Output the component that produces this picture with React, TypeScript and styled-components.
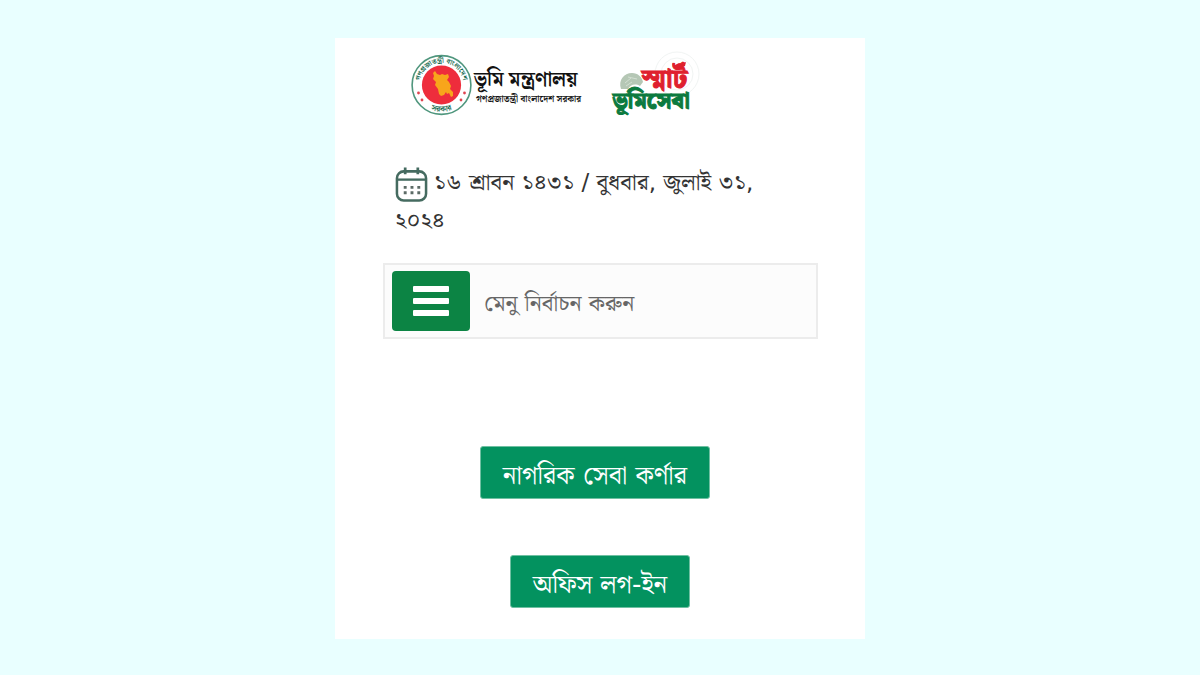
import React from "react";
import styled, { createGlobalStyle } from "styled-components";

const bengali = '"DejaVu Sans", "Noto Serif Bengali", serif';
const logoFont = '"Noto Serif Bengali", "Liberation Serif", serif';

const GlobalStyle = createGlobalStyle`
  *, *::before, *::after { box-sizing: border-box; }
  body {
    margin: 0;
    background: #e9ffff;
    font-family: ${bengali};
    color: #333;
  }
`;

const Page = styled.div`
  min-height: 100vh;
  display: flex;
  justify-content: center;
  align-items: flex-start;
  padding: 38px 16px 36px;
`;

const Card = styled.main`
  width: 100%;
  max-width: 530px;
  padding: 12px 47px 31px 48px;
  background: #fff;
`;

const Header = styled.header`
  display: flex;
  align-items: center;
  gap: 28px;
  height: 70px;
  padding-left: 28px;
  font-family: ${logoFont};
`;

const Ministry = styled.a`
  display: flex;
  align-items: center;
  gap: 2px;
  color: #111;
  text-decoration: none;
`;

const MinistryText = styled.span`
  display: flex;
  flex-direction: column;
  padding-top: 2px;
  white-space: nowrap;
`;

const MinistryName = styled.strong`
  font-size: 20px;
  line-height: 28px;
`;

const MinistrySub = styled.span`
  padding-left: 2px;
  font-size: 9px;
  line-height: 12px;
  font-weight: 700;
`;

const SmartLogo = styled.a`
  display: block;
  line-height: 0;
`;

const DateLine = styled.p`
  margin: 44px 0 0;
  padding: 0 24px 0 12px;
  font-size: 23px;
  line-height: 37px;
`;

const CalendarIcon = styled.svg`
  width: 33px;
  height: 37px;
  margin-right: 6px;
  vertical-align: middle;
`;

const MenuBar = styled.nav`
  display: flex;
  align-items: center;
  gap: 14px;
  margin-top: 24px;
  padding: 6px 7px;
  border: 2px solid #ececec;
  background: #fcfcfc;
  color: #666;
  font-size: 23px;
  line-height: 36px;
`;

const MenuLabel = styled.span`
  padding-top: 3px;
`;

const MenuButton = styled.button`
  display: flex;
  align-items: center;
  justify-content: center;
  width: 78px;
  height: 60px;
  padding: 0;
  border: 0;
  border-radius: 4px;
  background: #0c8444;
  cursor: pointer;
`;

const Actions = styled.div`
  display: flex;
  flex-direction: column;
  align-items: center;
  gap: 56px;
  margin-top: 107px;
`;

const ActionButton = styled.button<{ $wide?: boolean }>`
  min-width: ${(p) => (p.$wide ? 230 : 180)}px;
  height: 53px;
  margin-right: ${(p) => (p.$wide ? 11 : 1)}px;
  padding: 4px 16px 0;
  border: 1px solid #6fc0a2;
  border-radius: 3px;
  background: #03925f;
  color: #fff;
  font-family: inherit;
  font-size: 26px;
  line-height: 40px;
  white-space: nowrap;
  cursor: pointer;
`;

const Emblem = () => (
  <svg width="61" height="62" viewBox="0 0 61 62" aria-hidden="true">
    <defs>
      <path id="arcTop" d="M11.6 42 A22 22 0 1 1 49.4 42" />
      <path id="arcBottom" d="M12 50 A26.5 26.5 0 0 0 49 50" />
    </defs>
    <circle cx="30.5" cy="31" r="29.4" fill="#fff" stroke="#4f967d" strokeWidth="1.6" />
    <circle cx="30.5" cy="31" r="19.6" fill="#ee2d3c" />
    <path
      d="M22 19l2-2 2 3 3 1 2-1 3 1 3-1 1 3-2 3 2 2 1 2 1 2-1 3 3 3v4l-2 1-2-4-2 1-1-2-2 3-3 1-2-2-1-5-3-4 1-3-3-3 1-3z"
      fill="#f8a51b"
    />
    <text fontSize="7" fontWeight="700" fill="#176b50" textAnchor="middle">
      <textPath href="#arcTop" startOffset="50%">গণপ্রজাতন্ত্রী বাংলাদেশ</textPath>
    </text>
    <text fontSize="8" fontWeight="700" fill="#176b50" textAnchor="middle">
      <textPath href="#arcBottom" startOffset="50%">সরকার</textPath>
    </text>
    <g fill="#e04450">
      <circle cx="7.5" cy="39" r="1.4" />
      <circle cx="11" cy="46" r="1.4" />
      <circle cx="53.5" cy="39" r="1.4" />
      <circle cx="50" cy="46" r="1.4" />
    </g>
  </svg>
);

const SmartMark = () => (
  <svg width="96" height="70" viewBox="0 0 96 70" role="img" aria-label="স্মার্ট ভূমিসেবা">
    <g fill="none" stroke="#f1f4f3">
      <circle cx="68" cy="24" r="22" />
      <circle cx="68" cy="24" r="16" />
    </g>
    <path d="M12 39c-3-9 3-16 11-16 6 0 10 4 11 9l-3 4c-5-3-10-1-12 3z" fill="#b5c7b5" />
    <path d="M17 36l6-4m-4-5l9 2m-12 4l6-5" stroke="#d3dfd2" fill="none" />
    <text x="33" y="37" fontSize="25" fontWeight="900" fill="#df202e" stroke="#df202e" strokeWidth="1">
      স্মার্ট
    </text>
    <path d="M63 13l3 2 4-2 3 1 4-2-1 4-5 2-7-1z" fill="#df202e" />
    <text x="4" y="58" fontSize="22" fontWeight="900" fill="#0c7a3f" stroke="#0c7a3f" strokeWidth="1">
      ভূমিসেবা
    </text>
  </svg>
);

const Calendar = () => (
  <CalendarIcon viewBox="0 0 34 37" fill="none" aria-hidden="true">
    <rect x="2" y="6" width="30" height="30" rx="7" stroke="#456b60" strokeWidth="2.6" />
    <path d="M2 14.5h30" stroke="#456b60" strokeWidth="2.4" />
    <path d="M10.5 2v7M23.5 2v7" stroke="#456b60" strokeWidth="2.8" />
    <path d="M9 22.5h17M9 28h17" stroke="#5c6b66" strokeWidth="3" strokeDasharray="3 4" />
  </CalendarIcon>
);

export default function App() {
  return (
    <>
      <GlobalStyle />
      <Page lang="bn">
        <Card>
          <Header>
            <Ministry href="#ministry">
              <Emblem />
              <MinistryText>
                <MinistryName>ভূমি মন্ত্রণালয়</MinistryName>
                <MinistrySub>গণপ্রজাতন্ত্রী বাংলাদেশ সরকার</MinistrySub>
              </MinistryText>
            </Ministry>
            <SmartLogo href="#smart">
              <SmartMark />
            </SmartLogo>
          </Header>
          <DateLine>
            <Calendar />
            ১৬ শ্রাবন ১৪৩১ / বুধবার, জুলাই ৩১, ২০২৪
          </DateLine>
          <MenuBar>
            <MenuButton type="button" aria-labelledby="menu-label">
              <svg width="36" height="30" viewBox="0 0 36 30" fill="#fff" aria-hidden="true">
                <rect width="36" height="6" rx="1" />
                <rect y="12" width="36" height="6" rx="1" />
                <rect y="24" width="36" height="6" rx="1" />
              </svg>
            </MenuButton>
            <MenuLabel id="menu-label">মেনু নির্বাচন করুন</MenuLabel>
          </MenuBar>
          <Actions>
            <ActionButton type="button" $wide>নাগরিক সেবা কর্ণার</ActionButton>
            <ActionButton type="button">অফিস লগ-ইন</ActionButton>
          </Actions>
        </Card>
      </Page>
    </>
  );
}
